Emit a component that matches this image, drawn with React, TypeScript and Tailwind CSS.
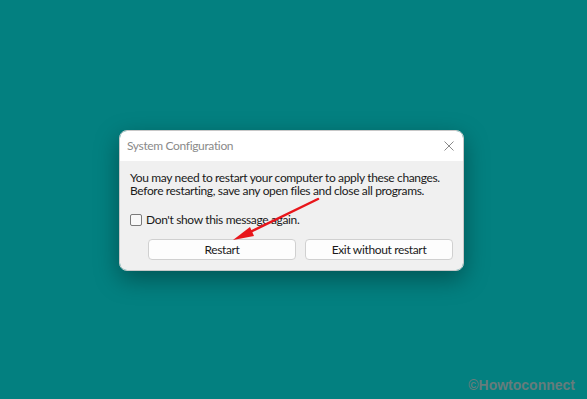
import React from 'react';

const font = { fontFamily: 'Lato, "Noto Sans", sans-serif' };

function CloseIcon() {
  return (
    <svg width="10" height="10" viewBox="0 0 10 10" className="text-[#8a8a8a]">
      <path d="M0.5 0.5 L9.5 9.5 M9.5 0.5 L0.5 9.5" stroke="currentColor" strokeWidth="1" fill="none" />
    </svg>
  );
}

function DialogButton({ label }: { label: string }) {
  return (
    <button className="w-[148px] h-[21px] rounded-[4px] border border-[#d0d0d0] bg-[#fdfdfd] text-[12px] tracking-[-0.35px] text-[#1a1a1a] leading-none">
      {label}
    </button>
  );
}

export default function App() {
  return (
    <div className="relative w-[587px] h-[399px] bg-[#038080] overflow-hidden pl-[119px] pt-[130px]" style={font}>
      {/* dialog */}
      <div className="w-[345px] rounded-[8px] overflow-hidden border border-[#c8c8c8] shadow-[0_8px_24px_rgba(0,0,0,0.35)] tracking-[-0.35px]">
        <div className="h-[30px] bg-white flex items-center justify-between pl-[7px] pr-[9px]">
          <span className="text-[12px] text-[#8a8a8a]">System Configuration</span>
          <CloseIcon />
        </div>
        <div className="bg-[#f0f0f0] pl-[10px] pr-[10px] pt-[10px] pb-[10px] text-[12px] text-[#1a1a1a]">
          <p className="leading-[13px] whitespace-nowrap">
            You may need to restart your computer to apply these changes.
            <br />
            Before restarting, save any open files and close all programs.
          </p>
          <label className="flex items-center gap-[4px] mt-[16px] leading-[13px]">
            <span className="w-[12px] h-[12px] rounded-[2px] border border-[#7a7a7a] bg-[#f8f8f8]" />
            <span>Don&apos;t show this message again.</span>
          </label>
          <div className="flex justify-end gap-[9px] mt-[13px]">
            <DialogButton label="Restart" />
            <DialogButton label="Exit without restart" />
          </div>
        </div>
      </div>

      {/* red arrow annotation */}
      <svg className="absolute left-0 top-0 pointer-events-none" width="587" height="399">
        <line x1="318" y1="199" x2="244" y2="235" stroke="#e8161b" strokeWidth="2.5" strokeLinecap="round" />
        <polygon points="233,240 250,227 254,236" fill="#e8161b" />
      </svg>

      {/* watermark */}
      <div className="absolute right-[12px] bottom-[3px] text-[14px] font-bold text-[#667c7c]" style={{ fontFamily: '"Liberation Sans", sans-serif' }}>
        ©Howtoconnect
      </div>
    </div>
  );
}
